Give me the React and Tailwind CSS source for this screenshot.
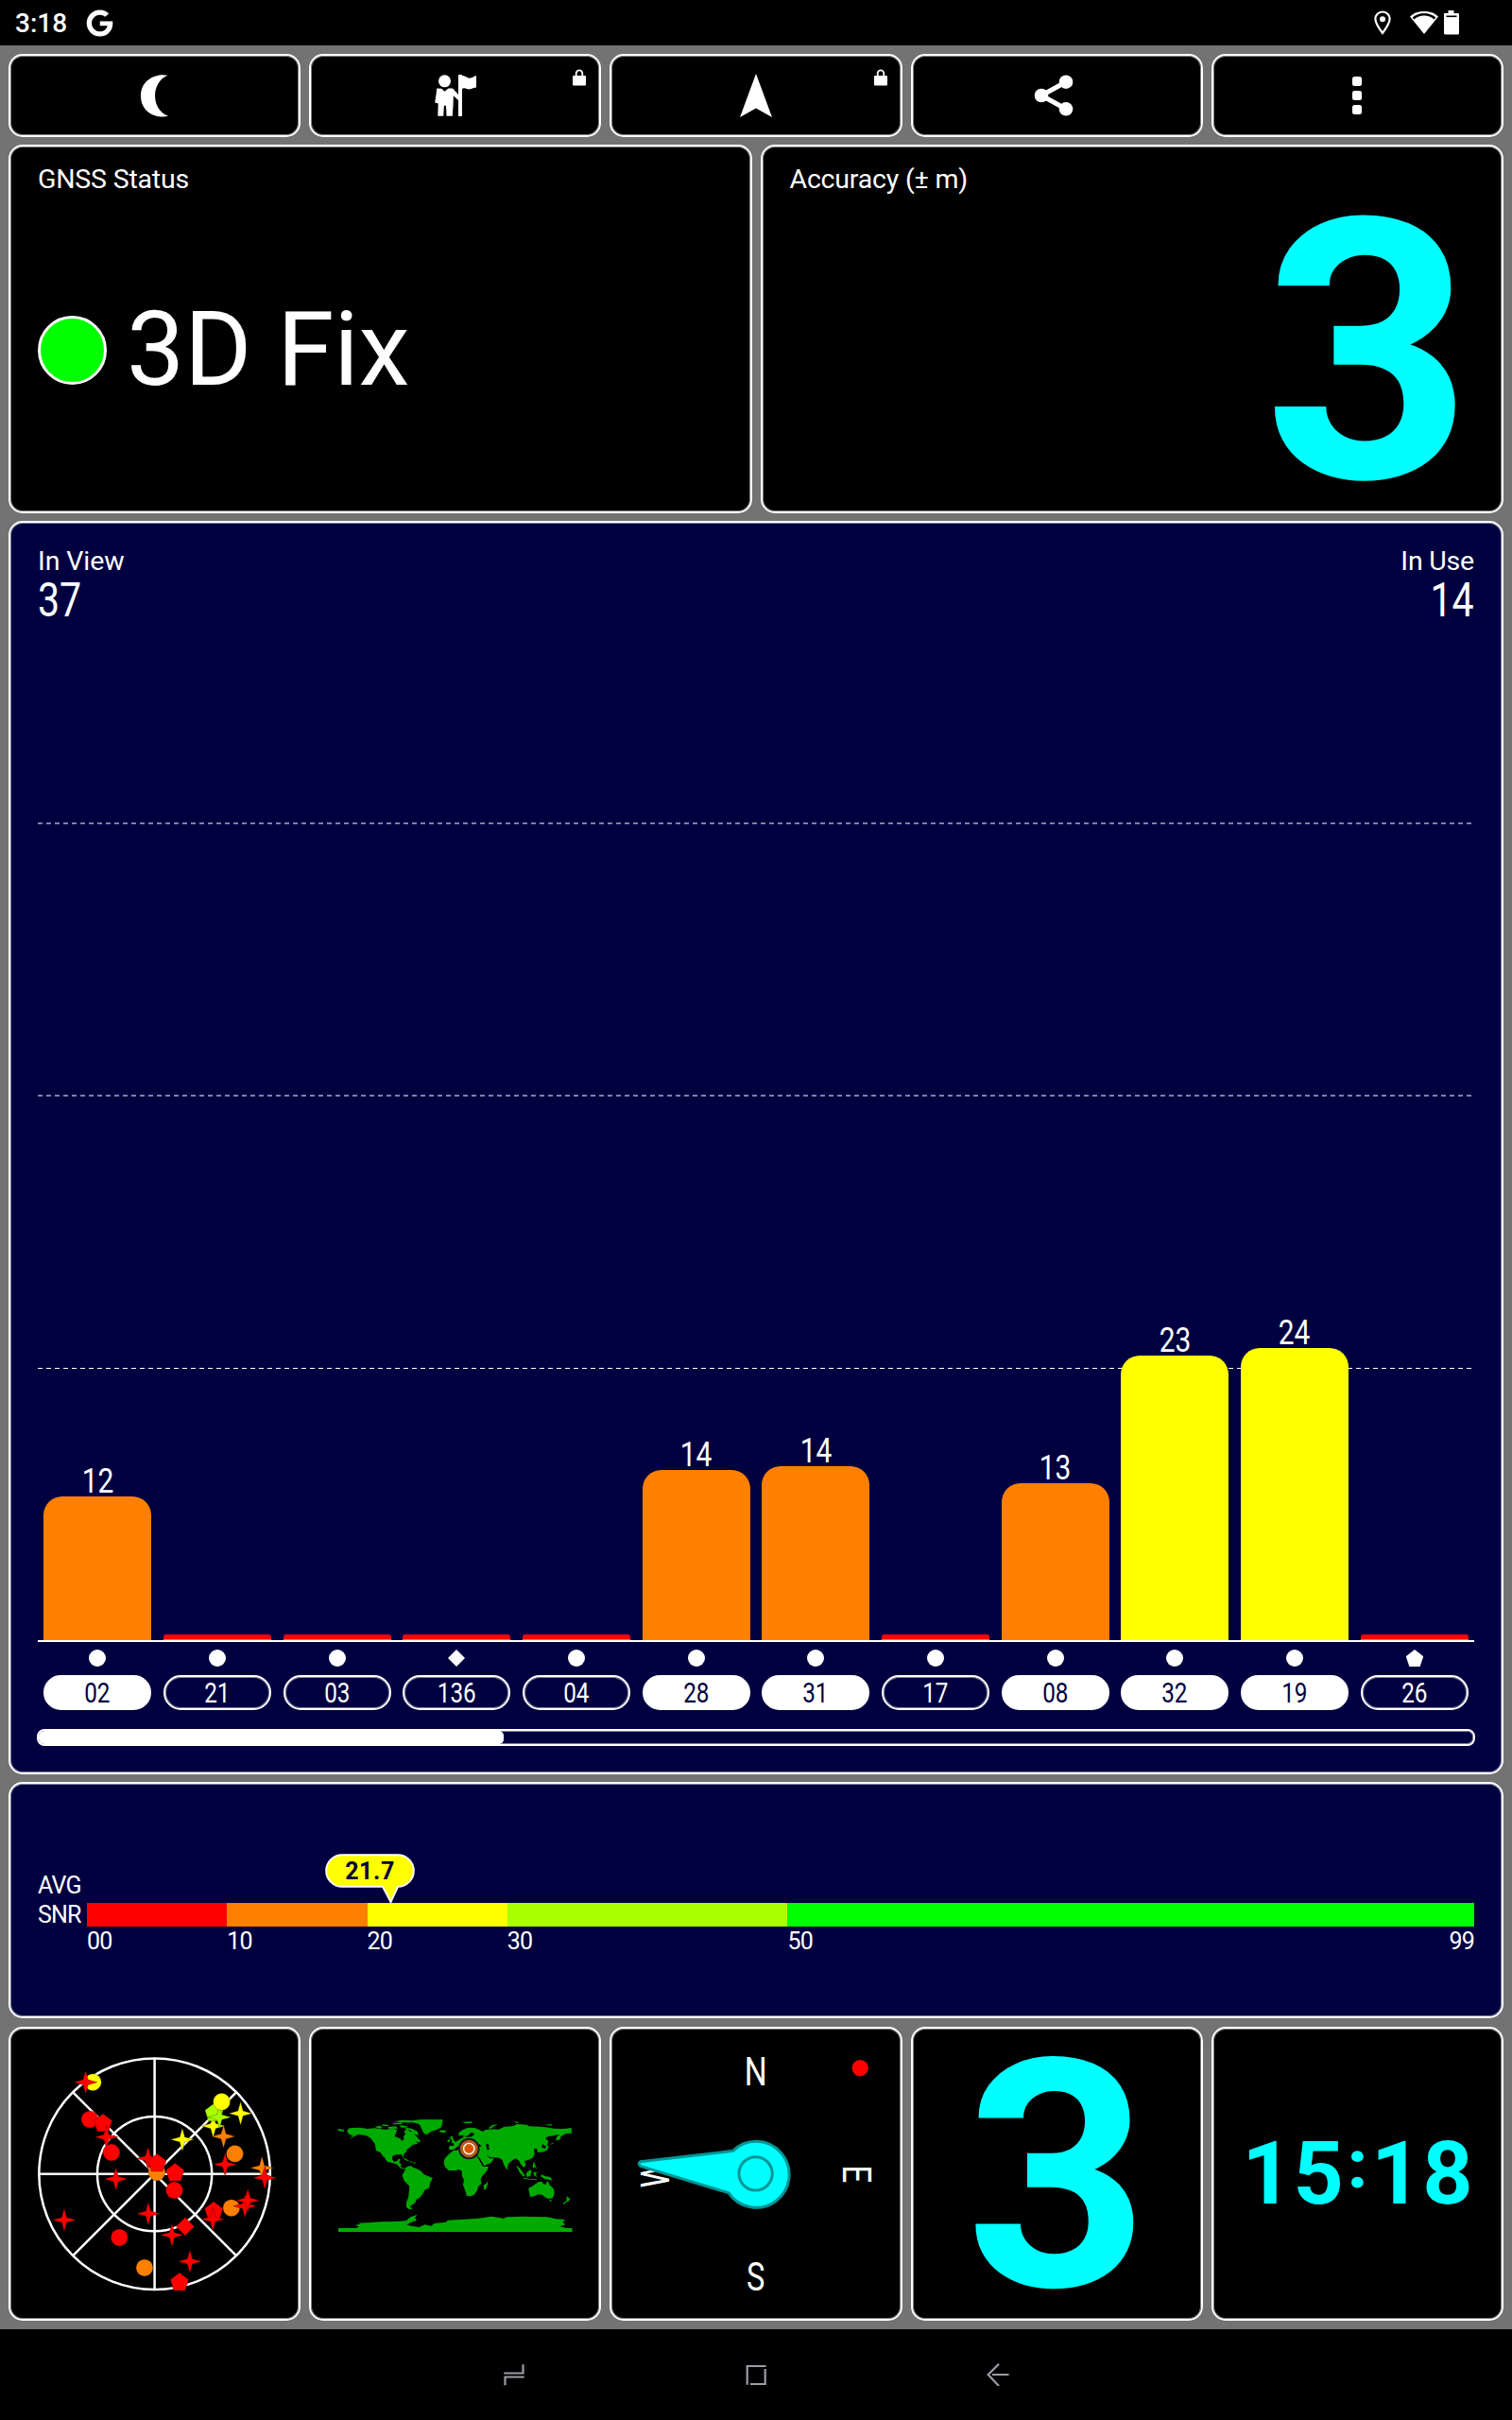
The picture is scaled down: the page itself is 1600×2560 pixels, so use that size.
import React from 'react';
import { FaGoogle } from 'react-icons/fa';

const CARD = 'rounded-[15px] border-2 border-white shadow-[inset_0_0_0_1px_rgba(255,255,255,0.5)]';

const satellites = [
  { id: '02', snr: 12, height: 152, color: '#ff8000', shape: 'circle', used: true },
  { id: '21', shape: 'circle' },
  { id: '03', shape: 'circle' },
  { id: '136', shape: 'diamond' },
  { id: '04', shape: 'circle' },
  { id: '28', snr: 14, height: 180, color: '#ff8000', shape: 'circle', used: true },
  { id: '31', snr: 14, height: 184, color: '#ff8000', shape: 'circle', used: true },
  { id: '17', shape: 'circle' },
  { id: '08', snr: 13, height: 166, color: '#ff8000', shape: 'circle', used: true },
  { id: '32', snr: 23, height: 301, color: '#ffff00', shape: 'circle', used: true },
  { id: '19', snr: 24, height: 309, color: '#ffff00', shape: 'circle', used: true },
  { id: '26', shape: 'pentagon' },
];

const RED = '#ff0000';
const ORANGE = '#ff8000';
const YELLOW = '#ffff00';
const LIME = '#aaff00';

// [shape, x, y, color], drawn in this order
const skyItems = [
  ['circle', 295, 218, YELLOW],
  ['star', 272, 218, RED],
  ['circle', 285, 336, RED],
  ['pentagon', 327, 347, RED],
  ['star', 338, 392, RED],
  ['circle', 354, 441, RED],
  ['star', 368, 525, RED],
  ['star', 204, 655, RED],
  ['star', 470, 460, RED],
  ['circle', 498, 504, ORANGE],
  ['pentagon', 499, 474, RED],
  ['pentagon', 556, 504, RED],
  ['circle', 554, 561, RED],
  ['star', 579, 400, YELLOW],
  ['star', 710, 390, ORANGE],
  ['star', 677, 357, YELLOW],
  ['pentagon', 680, 314, LIME],
  ['star', 697, 329, LIME],
  ['circle', 704, 280, YELLOW],
  ['star', 764, 317, YELLOW],
  ['star', 715, 479, RED],
  ['circle', 746, 445, ORANGE],
  ['star', 832, 490, ORANGE],
  ['star', 841, 521, RED],
  ['circle', 735, 617, ORANGE],
  ['star', 778, 611, RED],
  ['star', 787, 593, RED],
  ['pentagon', 679, 626, RED],
  ['star', 676, 653, RED],
  ['star', 471, 635, RED],
  ['diamond', 588, 676, RED],
  ['star', 546, 703, RED],
  ['circle', 379, 711, RED],
  ['circle', 459, 807, ORANGE],
  ['star', 603, 787, RED],
  ['pentagon', 570, 852, RED],
];

function Lock() {
  return (
    <svg className="absolute top-[14px] right-[13px]" width="16" height="18" viewBox="0 0 16 18">
      <rect x="1" y="7" width="14" height="10.5" rx="1" fill="#fff" />
      <path d="M4.700 8V4.600a3.300 3.300 0 0 1 6.600 0V8" fill="none" stroke="#fff" strokeWidth="1.8" />
    </svg>
  );
}

function ToolButton({ locked, children }) {
  return (
    <button className={`${CARD} relative flex h-[88px] items-center justify-center bg-black`}>
      {children}
      {locked && <Lock />}
    </button>
  );
}

function StatusBar() {
  return (
    <div className="flex h-[48px] items-center bg-black pr-[56px] pl-[16px]">
      <span className="pt-px text-[28px] leading-[28px] font-medium">3:18</span>
      <FaGoogle className="ml-[20px] size-[29px]" />
      <svg className="ml-auto" width="90" height="28" viewBox="0 0 90 28">
        <path d="M9 2.5c-4.400 0-7.600 3.300-7.600 7.600C1.400 15 9 25 9 25s7.600-10 7.600-14.900C16.600 5.800 13.400 2.500 9 2.500z" fill="none" stroke="#fff" strokeWidth="2.200" />
        <circle cx="9" cy="10.200" r="3" fill="#fff" />
        <path d="M38 7.500C46 .2 60 .2 68 7.500L53 26z" fill="#fff" />
        <path d="M41.500 9.500c6.500-5.700 16.500-5.700 23 0" fill="none" stroke="#000" strokeWidth="2.600" />
        <path d="M74 4h4.500V1h6v3H89a1.200 1.200 0 0 1 1 1.200V25a1.500 1.500 0 0 1-1.500 1.500h-13A1.500 1.500 0 0 1 74 25z" fill="#fff" />
        <path d="M76.500 7.300h11" stroke="#000" strokeWidth="1.600" />
      </svg>
    </div>
  );
}

function Toolbar() {
  return (
    <div className="grid grid-cols-5 gap-[9px]">
      <ToolButton>
        <svg width="30" height="45" viewBox="0 0 30 45" fill="#fff">
          <path d="M28.500.8C19-1.800 0 3.500 0 22.500s19 24.300 29 21.300C10.500 37 10.500 8 28.500.8z" />
        </svg>
      </ToolButton>
      <ToolButton locked>
        <svg width="44" height="45" viewBox="0 0 44 45" fill="#fff">
          <circle cx="10.500" cy="6.800" r="6.500" />
          <rect x="25" y="0" width="4" height="44" />
          <path d="M28 1.500c4-2 6 3 10 2 2.500-.6 4-2 6-2.500v12.500c-5 .5-7 3-10 1.500-2.500-1.200-4-.5-6 .5z" />
          <path d="M2.200 14.500l5 .3 3.300 2.900 4-3.200h4.500L25 21v6l-5.200-4.800-.2 9-.8 12.600h-6.200l-.7-11h-2l-.7 11H3.300l.4-13.200L.2 29.500 1.500 21z" />
        </svg>
      </ToolButton>
      <ToolButton locked>
        <svg width="36" height="47" viewBox="0 0 36 47" fill="#fff">
          <path d="M18 0L35 46 18 36.500 1 46z" />
        </svg>
      </ToolButton>
      <ToolButton>
        <svg className="mr-[7px]" width="42" height="44" viewBox="0 0 42 44">
          <path d="M34 7.700L8 22l26 14.300" fill="none" stroke="#fff" strokeWidth="5" />
          <circle cx="34" cy="7.700" r="7.300" fill="#fff" />
          <circle cx="8" cy="22" r="7.300" fill="#fff" />
          <circle cx="34" cy="36.300" r="7.300" fill="#fff" />
        </svg>
      </ToolButton>
      <ToolButton>
        <div className="flex flex-col gap-[5px]">
          <span className="size-[10px] rounded-[2.5px] bg-white" />
          <span className="size-[10px] rounded-[2.5px] bg-white" />
          <span className="size-[10px] rounded-[2.5px] bg-white" />
        </div>
      </ToolButton>
    </div>
  );
}

function SatShape({ shape }) {
  return (
    <svg className="mt-[8px] size-[18px]" viewBox="0 0 18 18" fill="#fff">
      {shape === 'circle' && <circle cx="9" cy="9" r="9" />}
      {shape === 'diamond' && <path d="M9 0l9 9-9 9-9-9z" />}
      {shape === 'pentagon' && <path d="M9 0l9.300 7.200L14.600 18H3.400L-.3 7.200z" />}
    </svg>
  );
}

function SignalChart() {
  return (
    <div className={`${CARD} h-[1326px] bg-[#000040] px-[29px] pt-[25px]`}>
      <div className="flex h-[82px] justify-between">
        <div>
          <div className="text-[28.5px] leading-[32px] tracking-[-0.1px]">In View</div>
          <div className="mt-[1px] origin-left scale-x-[0.83] text-[49.5px] leading-[49px]">37</div>
        </div>
        <div className="text-right">
          <div className="text-[28.5px] leading-[32px] tracking-[-0.2px]">In Use</div>
          <div className="mt-[1px] origin-right scale-x-[0.83] text-[49.5px] leading-[49px]">14</div>
        </div>
      </div>

      {/* bars */}
      <div className="relative h-[1077px] border-b-2 border-white">
        <svg className="absolute inset-0 h-full w-full">
          {[211, 499, 787.5].map((y) => (
            <line key={y} x1="0" x2="1518" y1={y} y2={y} stroke="#fff" strokeWidth="1.2" strokeDasharray="5 4" />
          ))}
        </svg>
        <div className="relative grid h-full grid-cols-12 items-end">
          {satellites.map((sat) => (
            <div key={sat.id} className="flex flex-col items-center">
              {sat.snr && (
                <span className="mb-[-2px] scale-x-[0.82] text-[36.5px] leading-[36px]">{sat.snr}</span>
              )}
              {sat.snr ? (
                <div className="w-[114px] rounded-t-[20px]" style={{ height: sat.height, backgroundColor: sat.color }} />
              ) : (
                <div className="h-[6px] w-[114px] rounded-t-[3px] border-b border-[#ff8000] bg-[#ff0000]" />
              )}
            </div>
          ))}
        </div>
      </div>

      <div className="grid grid-cols-12">
        {satellites.map((sat) => (
          <div key={sat.id} className="flex flex-col items-center">
            <SatShape shape={sat.shape} />
            <div
              className={`mt-[9px] flex h-[37px] w-[114px] items-center justify-center rounded-[19px] border-2 border-white text-[30px] leading-[30px] shadow-[inset_0_0_0_1px_rgba(255,255,255,0.5)] ${
                sat.used ? 'bg-white text-[#000040]' : 'text-white'
              }`}
            >
              <span className="scale-x-[0.81]">{sat.id}</span>
            </div>
          </div>
        ))}
      </div>

      <div className="-mx-[1px] mt-[20px] h-[18px] overflow-hidden rounded-[8px] border-2 border-white shadow-[inset_0_0_0_1px_rgba(255,255,255,0.5)]">
        <div className="h-full w-[492px] rounded-r-[5px] bg-white" />
      </div>
    </div>
  );
}

function AverageSnr() {
  return (
    <div className={`${CARD} flex h-[250px] bg-[#000040] px-[29px] text-[25px]`}>
      <div className="w-[52px] pt-[92px] leading-[31px] tracking-[-0.8px]">
        <div>AVG</div>
        <div>SNR</div>
      </div>
      <div className="relative flex-1 pt-[126px]">
        <div className="flex h-[25px]">
          <div className="flex-[10] bg-[#ff0000]" />
          <div className="flex-[10] bg-[#ff8000]" />
          <div className="flex-[10] bg-[#ffff00]" />
          <div className="flex-[20] bg-[#aaff00]" />
          <div className="flex-[49] bg-[#00ff00]" />
        </div>
        <div className="flex pt-[1px] leading-[30px] tracking-[-0.8px]">
          <span className="w-0 flex-[10]">00</span>
          <span className="w-0 flex-[10]">10</span>
          <span className="w-0 flex-[10]">20</span>
          <span className="w-0 flex-[20]">30</span>
          <span className="flex w-0 flex-[49] justify-between">
            <span>50</span>
            <span>99</span>
          </span>
        </div>
        {/* value bubble */}
        <div className="absolute top-[74px] left-[252px] h-[36px] w-[95px]">
          <svg className="absolute top-0 left-0" width="96" height="54" viewBox="0 0 96 54">
            <path
              d="M18 1.200H77a16.800 16.800 0 0 1 0 33.600L69.500 51 61 34.800H18A16.800 16.800 0 0 1 18 1.200z"
              fill="#ffff00"
              stroke="#fff"
              strokeWidth="2"
            />
          </svg>
          <div className="relative text-center leading-[37px] font-bold tracking-[0.6px] text-[#000040]">21.7</div>
        </div>
      </div>
    </div>
  );
}

function SkyShape({ shape, x, y, color }) {
  const paths = {
    star: 'M0-37L8-8 37 0 8 8 0 37-8 8-37 0-8-8z',
    pentagon: 'M0-29L29-7 18 27H-18L-29-7z',
    diamond: 'M0-29L29 0 0 29-29 0z',
  };
  return (
    <g transform={`translate(${x} ${y})`} fill={color} stroke="#000" strokeOpacity="0.4" strokeWidth="2">
      {shape === 'circle' ? <circle r="27" /> : <path d={paths[shape]} />}
    </g>
  );
}

function SkyPlot() {
  return (
    <div className={`${CARD} bg-black`}>
      <svg className="h-full w-full" viewBox="33 48 916 921">
        <g fill="none" stroke="#fff" strokeWidth="7.5">
          <circle cx="491" cy="509" r="367" />
          <circle cx="491" cy="509" r="182" />
          <path d="M124 509H858M491 142V876M231 249L751 769M751 249L231 769" />
        </g>
        {skyItems.map(([shape, x, y, color], i) => (
          <SkyShape key={i} shape={shape} x={x} y={y} color={color} />
        ))}
      </svg>
    </div>
  );
}

function WorldMap() {
  return (
    <div className={`${CARD} bg-black`}>
      <svg className="h-full w-full" viewBox="28 -162 916 921">
        <g fill="#00aa00">
          {/* north america */}
          <path d="M143 164L147 155 158 153 185 152 208 156 230 154 262 158 290 156 302 159 297 172 294 180 312 187 316 194 324 190 322 182 328 172 324 162 334 158 343 165 352 163 360 177 377 195 371 199 362 196 367 203 350 207 344 214 333 221 329 231 323 236 322 247 316 238 299 238 287 242 286 252 291 260 302 258 306 251 312 252 308 264 315 267 313 277 323 282 328 279 325 284 313 281 300 268 286 264 270 260 258 240 262 250 248 230 235 225 231 203 218 186 203 177 178 173 166 180 150 188 162 178 149 173z" />
          <path d="M114 157h8l12 3-2 4-18-2z" />
          {/* arctic islands */}
          <path d="M230 150l16-4 10 5-8 4zM255 142l22 2-5 4-17-2zM272 150l26-2 6 7-28 1zM290 138l30-2-4 5-26 1zM308 145l20 1 10 5-22 1zM328 152l22 4 16 8 4 12-10-2-12-12-18-3z" />
          {/* greenland, iceland */}
          <path d="M291 133L318 128 350 130 372 127 400 126 447 127 445 140 441 152 425 160 408 165 397 174 387 171 378 152 372 141 352 136 320 136zM435 163l10-3 14 2-5 6-14-1z" />
          <path d="M316 247l14 4 12 8-10-2zM340 259l10 1-2 4zM354 262h5v4h-5z" />
          {/* south america */}
          <path d="M329 278L345 273 352 278 368 284 380 292 386 300 415 312 407 326 404 343 389 350 383 362 372 376 362 381 360 390 350 397 343 402 350 411 340 411 331 405 331 390 338 372 341 338 324 320 318 303 325 292z" />
          {/* africa */}
          <path d="M466 236L480 225 506 222 508 232 530 236 552 238 564 256 576 276 592 275 588 288 572 306 567 316 570 330 560 338 556 352 546 366 534 370 523 369 518 352 511 334 514 318 507 304 508 290 498 285 484 289 466 288 455 278 450 266 452 252z" />
          <path d="M578 349L576 336 585 329 590 321 589 334 583 349z" />
          {/* europe and asia */}
          <path d="M466 222L468 210 482 209 481 201 492 195 502 188 512 184 512 177 522 182 540 181 548 172 538 167 528 176 520 180 512 176 497 178 498 168 512 158 528 152 548 153 568 161 574 165 580 160 604 157 625 158 642 149 668 148 682 141 714 143 720 148 758 149 784 152 800 155 824 156 838 155 856 153V170L838 171 822 180 820 190 806 193 808 182 818 174 796 178 782 180 772 186 782 194 779 208 771 211 764 203 760 214 770 218 776 224 762 230 748 230 746 220 736 218 738 236 732 248 718 255 706 258 711 270 704 279 694 268 690 258 678 250 668 256 655 267 650 284 642 272 636 255 626 248 610 247 596 246 586 238 596 250 610 250 600 264 578 273 566 252 556 240 560 222 540 217 534 224 528 218 518 208 506 204 494 212 482 222z" />
          <path d="M469 184l8-6 4 14 9 8-16 2 3-8zM462 192l8-3v8l-8 1z" />
          <path d="M508 134l34-1-6 5-16 1zM592 154l12-10 18-2-16 8-8 6zM672 133l16 1-4 5zM770 143l22-2v5z" />
          {/* japan, south east asia */}
          <path d="M776 206l8 6-6 12-16 4-3-4 12-3zM784 206l4-2 12-4-2 3zM736 260l4 10 6 14-8-8-4 6-2-6zM682 272l10 10 16 22-4 4-12-12-10-20zM712 296l12-10 5 4-4 16-12 2zM734 294l14-1-6 6 4 10-8-4zM704 311l20 4 22 1-2 3-40-4zM760 301l14 6 14 2 8 12-12-4-14-2-12-8zM649 278l4 1v6l-4-1z" />
          {/* australia, new zealand */}
          <path d="M719 344L730 339 742 330 752 324 763 324 765 330 774 333 779 320 786 334 800 348 801 362 796 376 782 378 770 372 764 366 750 364 738 370 724 372zM785 381l8 1-4 6zM840 370l12 8-6 8-6 2zM838 385l4 2-10 8-4-1z" />
          {/* antarctica */}
          <path d="M115 471H172L182 466 166 462 186 458 176 455 210 454 250 451 300 450 330 448 345 436 366 428 358 438 364 446 344 454 332 460 346 464 372 468 390 460 410 464 420 456 458 452 462 446 500 444 560 440 600 434 628 438 640 441 650 436 700 434 780 436 806 442 836 444 828 452 836 460 818 466 840 471H858V483H115z" />
        </g>
        {/* inland seas */}
        <path d="M584 204l6-1 4 6-2 6 4 6-8 2-2-8zM552 210l12-6 6 8-14 2zM558 246l4 2 14 26-4-2z" fill="#000" />
        <g fill="none">
          <circle cx="530" cy="219" r="31" fill="#b85a18" stroke="#181820" strokeWidth="6" />
          <circle cx="530" cy="219" r="17" fill="#d06000" stroke="#fff" strokeWidth="4" />
          <circle cx="530" cy="219" r="7" stroke="#ff2000" strokeWidth="4" strokeDasharray="4 4" />
        </g>
      </svg>
    </div>
  );
}

function Compass() {
  return (
    <div className={`${CARD} bg-black`}>
      <svg className="h-full w-full" viewBox="22 48 916 921">
        <g fill="#fff" fontSize="129" textAnchor="middle" fontFamily="Roboto, sans-serif">
          <text transform="translate(480 228) scale(0.78 1)">N</text>
          <text transform="translate(480 880) scale(0.76 1)">S</text>
          <text transform="translate(757 509) rotate(90) scale(0.78 1)">E</text>
          <text transform="translate(204 509) rotate(-90) scale(0.78 1)">W</text>
        </g>
        <circle cx="812" cy="173" r="26" fill="#ff0000" />
        <path
          d="M408 436L114 470Q104 477 116 485L394 569A105 105 0 1 0 408 436z"
          fill="#00ffff"
          stroke="#009696"
          strokeWidth="9"
          strokeLinejoin="round"
        />
        <circle cx="480" cy="508" r="53" fill="none" stroke="#009696" strokeWidth="9" />
      </svg>
    </div>
  );
}

function NavBar() {
  return (
    <div className="flex h-[96px] items-center justify-center gap-[232px] bg-black">
      <svg width="24" height="24" viewBox="0 0 24 24" fill="none" stroke="#9c9ca6" strokeWidth="2.2">
        <path d="M1.300 10.500H21.500V1.300M22.700 14.500H2.500V23.300" />
      </svg>
      <svg width="24" height="24" viewBox="0 0 24 24" fill="none" stroke="#9c9ca6" strokeWidth="2.2">
        <path d="M22.500 3H2.700V22.700M6 22H21.700V6" />
      </svg>
      <svg width="24" height="24" viewBox="0 0 24 24" fill="none" stroke="#9c9ca6" strokeWidth="2.2">
        <path d="M13 .7L1.700 12 13 24M6 12H23.500" />
      </svg>
    </div>
  );
}

const App = () => {
  return (
    <div className="flex h-[2560px] w-[1600px] flex-col bg-[#737373] font-[Roboto,sans-serif] text-white">
      <StatusBar />

      <div className="flex h-[2416px] flex-col gap-[8px] px-[9px] pt-[9px]">
        <Toolbar />

        <div className="grid h-[390px] grid-cols-2 gap-[9px]">
          <div className={`${CARD} bg-black px-[29px] pt-[19px]`}>
            <div className="text-[28.5px] leading-[32px] tracking-[-0.2px]">GNSS Status</div>
            <div className="mt-[110px] flex items-center gap-[21px]">
              <span className="-mt-[1px] size-[73px] rounded-full border-[3px] border-white bg-[#00ff00]" />
              <span className="text-[109px] leading-[109px] tracking-[-0.2px]">3D Fix</span>
            </div>
          </div>
          <div className={`${CARD} bg-black px-[29px] pt-[19px]`}>
            <div className="text-[28.5px] leading-[32px] tracking-[-0.2px]">Accuracy (± m)</div>
            <div className="mt-[18px] pr-[2px] text-right text-[385px] leading-[300px] font-bold text-[#00ffff]">3</div>
          </div>
        </div>

        <SignalChart />
        <AverageSnr />

        <div className="mt-[1px] grid h-[311px] grid-cols-5 gap-[9px]">
          <SkyPlot />
          <WorldMap />
          <Compass />
          <div className={`${CARD} flex items-center justify-center bg-black pt-[6px] pl-[1px]`}>
            <span className="text-[337px] leading-[301px] font-bold text-[#00ffff]">3</span>
          </div>
          <div className={`${CARD} flex items-center justify-center bg-black pl-[1px] text-[93px] leading-[93px] font-bold tracking-[1px] text-[#00ffff]`}>
            <span>15</span>
            <span className="relative -top-[9px] w-[28px] text-center text-[70px] font-black">:</span>
            <span>18</span>
          </div>
        </div>
      </div>

      <NavBar />
    </div>
  );
};

export default App;
